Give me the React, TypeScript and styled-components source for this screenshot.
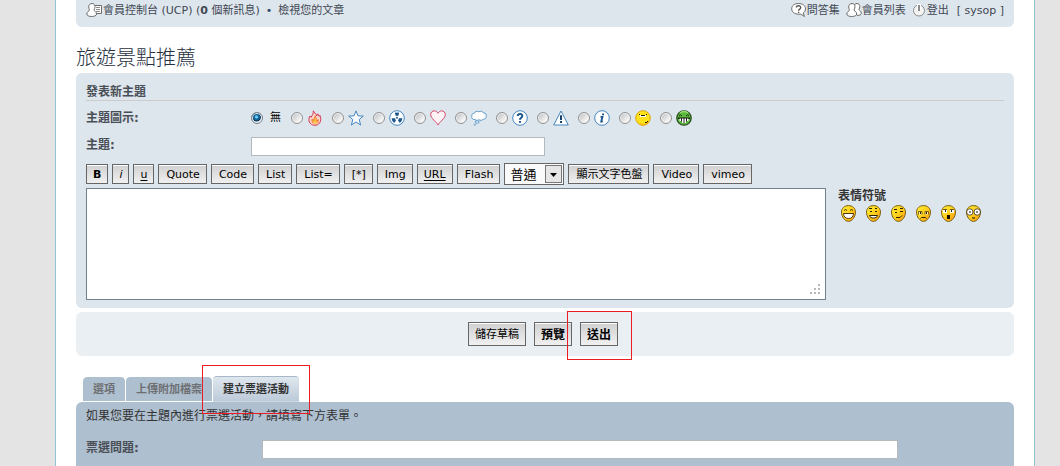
import React from "react";
import styled, { createGlobalStyle, css } from "styled-components";

const fontStack = `"DejaVu Sans", "Noto Sans CJK TC", sans-serif`;

const GlobalStyle = createGlobalStyle`
  *, *::before, *::after { box-sizing: border-box; }
  body {
    margin: 0;
    background: #e4e4e4;
    color: #333;
    font-family: ${fontStack};
    font-size: 11px;
    line-height: 16px;
  }
`;

const Page = styled.div`
  display: flex;
  flex-direction: column;
  min-height: 100vh;
  margin: 0 25px 0 55px;
  padding: 0 20px;
  background: #fff;
  border: 1px solid #8fc3d0;
  border-width: 0 1px;
`;

const NavBar = styled.nav`
  display: flex;
  justify-content: space-between;
  height: 27px;
  padding: 0 10px;
  line-height: 22px;
  color: #3f4653;
  background: #dee6ed;
  border-radius: 0 0 6px 6px;
`;

const NavGroup = styled.div`
  display: flex;
  align-items: center;
  gap: 6px;
  height: 22px;
`;

const NavLink = styled.a`
  display: inline-flex;
  align-items: center;
  color: inherit;
  text-decoration: none;
  white-space: pre;
  svg { margin-top: -2px; }
`;

const UserName = styled.span`
  margin-left: 8px;
`;

const NavSep = styled.span`
  color: #2b4a68;
`;

const Title = styled.h2`
  margin: 19px 0 0;
  padding-bottom: 3px;
  font-size: 20px;
  font-weight: 300;
  line-height: 24px;
  color: #28313f;
`;

const Panel = styled.section`
  padding: 10px 10px 8px;
  background: #dee6ed;
  border-radius: 6px;
`;

const PanelHeading = styled.h3`
  margin: 0 0 5px;
  padding-top: 1px;
  font-size: 12px;
  font-weight: 700;
  line-height: 16px;
  color: #4a4f57;
  border-bottom: 1px solid #ccc;
`;

const FieldRow = styled.div<{ $label?: number }>`
  display: grid;
  grid-template-columns: ${(p) => p.$label ?? 165}px 1fr;
  align-items: center;
`;

const FieldLabel = styled.label`
  font-size: 12px;
  font-weight: 700;
  color: #4a4f57;
`;

const IconChoices = styled.div`
  display: flex;
  align-items: center;
  height: 24px;
`;

const Choice = styled.label<{ $first?: boolean }>`
  display: flex;
  align-items: center;
  gap: ${(p) => (p.$first ? 7 : 4)}px;
  width: ${(p) => (p.$first ? 40 : 41)}px;
  color: #000;
`;

const Radio = styled.input.attrs({ type: "radio" })`
  appearance: none;
  flex: none;
  width: 12px;
  height: 12px;
  margin: 0;
  border: 1px solid #929292;
  border-radius: 50%;
  background: linear-gradient(135deg, #c4c6c8 15%, #f6f6f6 75%);
  box-shadow: inset 0 0 0 1px #f2f2f2;
  &:checked {
    border-color: #6f7f8c;
    background: radial-gradient(circle at 45% 40%, #6fd3f5 0 1px, #11639a 2px 3px, #0b2f4f 4px, #e8eef2 5px);
  }
`;

const TextInput = styled.input`
  max-width: 100%;
  height: 19px;
  padding: 0 3px;
  font: inherit;
  color: #333;
  background: #fff;
  border: 1px solid #b4babb;
  border-radius: 0;
`;

const SubjectInput = styled(TextInput)`
  width: 294px;
`;

const SubjectRow = styled(FieldRow)`
  height: 33px;
  align-items: start;
  padding-top: 7px;
`;

const Toolbar = styled.div`
  display: flex;
  align-items: center;
  gap: 4px;
  height: 22px;
  margin-bottom: 3px;
`;

const buttonFace = css`
  font-family: inherit;
  font-size: 11px;
  color: #000;
  white-space: nowrap;
  background: linear-gradient(#d0d0d0, #f0f0f0);
  border: 1px solid #666;
  border-radius: 0;
  box-shadow: inset 0 1px #fff;
`;

const ToolButton = styled.button<{ $look?: "bold" | "italic" | "underline" }>`
  ${buttonFace}
  height: 20px;
  padding: 1px 6px 0 ${(p) => (p.$look ? 6 : 7)}px;
  line-height: 16px;
  font-weight: ${(p) => (p.$look === "bold" ? 700 : 400)};
  font-style: ${(p) => (p.$look === "italic" ? "italic" : "normal")};
  text-decoration: ${(p) => (p.$look === "underline" ? "underline" : "none")};
  text-underline-offset: 2px;
`;

const SelectBox = styled.div`
  position: relative;
  width: 60px;
  height: 22px;
`;

const SizeSelect = styled.select`
  appearance: none;
  width: 100%;
  height: 100%;
  padding: 0 20px 0 5px;
  font-family: inherit;
  font-size: 13px;
  color: #000;
  background: #fafafa;
  border: 1px solid #666;
  border-radius: 0;
`;

const SelectArrow = styled.svg`
  position: absolute;
  top: 2px;
  right: 2px;
  width: 17px;
  height: 18px;
  pointer-events: none;
`;

const EditorRow = styled.div`
  display: flex;
  gap: 12px;
`;

const EditorBox = styled.div`
  position: relative;
  flex: 1;
  height: 112px;
`;

const Editor = styled.textarea`
  display: block;
  width: 100%;
  height: 100%;
  padding: 3px;
  font: inherit;
  resize: none;
  background: #fff;
  border: 1px solid #71808c;
  border-radius: 0;
`;

const Grip = styled.svg`
  position: absolute;
  right: 6px;
  bottom: 6px;
  pointer-events: none;
`;

const SmileyBox = styled.aside`
  width: 166px;
`;

const SmileyTitle = styled.strong`
  display: block;
  padding-top: 1px;
  font-size: 12px;
  line-height: 14px;
  color: #333;
`;

const SmileyList = styled.div`
  display: flex;
  gap: 8px;
  padding: 2px;
`;

const SmileyButton = styled.button`
  display: block;
  width: 17px;
  height: 17px;
  padding: 0;
  background: none;
  border: 0;
  svg { display: block; }
`;

const SubmitBar = styled.div`
  display: flex;
  align-items: center;
  justify-content: center;
  gap: 8px;
  height: 44px;
  margin-top: 4px;
  padding-right: 4px;
  background: #eaeff3;
  border-radius: 6px;
`;

const SubmitItem = styled.div`
  position: relative;
`;

const FormButton = styled.button<{ $strong?: boolean }>`
  ${buttonFace}
  display: block;
  height: 24px;
  padding: 1px 6px 0;
  line-height: 20px;
  font-size: ${(p) => (p.$strong ? 12 : 11)}px;
  font-weight: ${(p) => (p.$strong ? 700 : 400)};
`;

const Marker = styled.span<{ $inset: string }>`
  position: absolute;
  inset: ${(p) => p.$inset};
  z-index: 2;
  border: 1px solid #ed1c24;
  pointer-events: none;
`;

const Tabs = styled.div`
  display: flex;
  align-items: flex-end;
  gap: 1px;
  height: 26px;
  margin: 20px 0 0;
  padding-left: 7px;
`;

const Tab = styled.a<{ $active?: boolean }>`
  position: relative;
  height: ${(p) => (p.$active ? 26 : 25)}px;
  padding: 0 10px;
  font-weight: 700;
  line-height: 25px;
  text-decoration: none;
  color: ${(p) => (p.$active ? "#333" : "#6d6f73")};
  background: ${(p) => (p.$active ? "linear-gradient(#dfe7ee, #bdcad9)" : "#aebfcf")};
  border-top: ${(p) => (p.$active ? "1px solid #a9b8c8" : "0")};
  border-bottom: ${(p) => (p.$active ? "1px solid #cdd8e3" : "1px solid #fff0")};
  background-clip: padding-box;
  border-radius: 4px 4px 0 0;
`;

const PollPanel = styled.section`
  flex: 1;
  padding: 6px 10px 0;
  color: #333;
  background: #aebfcf;
  border-radius: 6px 6px 0 0;
`;

const PollHint = styled.p`
  margin: 0 0 16px;
  font-size: 12px;
  line-height: 16px;
`;

const PollInput = styled(TextInput)`
  width: 636px;
`;

const PollLabel = styled(FieldLabel)`
  align-self: start;
`;

/* 16px navigation glyphs */
const navStroke = { fill: "#fff", stroke: "#6b6b6b", strokeWidth: 1 };

const UcpIcon = () => (
  <svg width="17" height="16" viewBox="0 0 17 16" aria-hidden="true">
    <path d="M8 3.500h7.500v8H9" {...navStroke} />
    <path d="M10 5.500h4M10 7.500h4M10 9.500h4" stroke="#8b8b8b" />
    <path d="M6 1.500c2 0 3 1.500 3 3.300 0 1.300-.6 2.400-1 3.100 0 1.200 2.500 1.500 2.500 4.100 0 1.500-2 2.500-4.800 2.500S.8 13.500.8 12c0-2.400 2.700-3 2.700-4.100C3 7.200 2.700 6.100 2.700 4.800 2.700 3 4 1.500 6 1.500z" {...navStroke} />
  </svg>
);

const FaqIcon = () => (
  <svg width="16" height="16" viewBox="0 0 16 16" aria-hidden="true">
    <path d="M7.500 1.500c4.200 0 7 2.200 7 5.300 0 1.900-.9 3.300-2.300 4.200l1.300 3.500-3.800-2.400c-4.700.7-9-1.400-9-5.300 0-3.100 2.800-5.300 6.800-5.300z" {...navStroke} />
    <path d="M5.400 5.600c0-2.600 4.500-2.400 4.300.1-.1 1.500-2.100 1.400-2.100 3M7.600 9.800v1.300" fill="none" stroke="#555" strokeWidth="1.400" />
  </svg>
);

const MembersIcon = () => (
  <svg width="16" height="16" viewBox="0 0 16 16" aria-hidden="true">
    <path d="M11 1.500c1.800 0 2.800 1.400 2.800 3 0 1.200-.5 2.100-.9 2.800 0 1.200 2.400 1.500 2.400 4 0 1.300-1.700 2.200-4 2.200L8 8V4c.3-1.500 1.400-2.500 3-2.500z" {...navStroke} />
    <path d="M6 1.500c2 0 3 1.500 3 3.300 0 1.300-.6 2.400-1 3.100 0 1.200 2.700 1.500 2.700 4.100 0 1.500-2.200 2.500-5 2.500S.8 13.500.8 12c0-2.400 2.700-3 2.700-4.100C3 7.200 2.700 6.100 2.700 4.800 2.700 3 4 1.500 6 1.500z" {...navStroke} />
  </svg>
);

const LogoutIcon = () => (
  <svg width="15" height="16" viewBox="0 0 15 16" aria-hidden="true">
    <circle cx="7" cy="8.500" r="5.500" fill="#f4f4f4" stroke="#8b8b8b" />
    <path d="M7 2v6" stroke="#fff" strokeWidth="4" />
    <path d="M7 3v6" stroke="#666" strokeWidth="1.500" />
  </svg>
);

/* Topic icons */
const blue = "#4486c0";
const TopicSvg = ({ children }: { children: React.ReactNode }) => (
  <svg width="16" height="16" viewBox="0 0 16 16" aria-hidden="true">{children}</svg>
);

const topicIcons: { name: string; art: React.ReactNode }[] = [
  {
    name: "fire",
    art: (
      <>
        <path d="M6.300.8c.4 1.800 3.200 2.700 3.200 5.200l1.200-2.200c.4 1 .9 1.500 1.200 2.500l1.200-.8c1 3 1 5.700-.7 7.800-1 1.300-2.600 2-4.500 2-3.500 0-6-2.300-6-5.500 0-1.500.5-2.600 1-3.800l1.300 1.300C5 5.500 6.800 3.300 6.300.8z" fill="#fbd9c8" stroke="#d4365a" />
        <path d="M8 5.800c.3 2-1.500 2.400-1.300 4.400L5 9c-.6 3 .6 5 3 5s3.800-1.600 3.400-4.500L10 11C9.700 9 9.300 7.500 8 5.800z" fill="#fdb73c" stroke="#f0694a" strokeWidth=".8" />
        <path d="M6 12.500c1 1 3.200 1 4.300 0" stroke="#ffe98a" fill="none" />
      </>
    ),
  },
  {
    name: "star",
    art: <path d="M8 .9l2 4.900 5.300.3-4.100 3.400 1.400 5.500L8 12l-4.600 3 1.400-5.500L.7 6.100 6 5.800z" fill="#f7fbfe" stroke={blue} strokeLinejoin="round" />,
  },
  {
    name: "radioactive",
    art: (
      <>
        <circle cx="8" cy="8" r="7.300" fill="#fff" stroke={blue} />
        <circle cx="8" cy="7.800" r="1" fill="#1b568f" />
        <path d="M5.800 2.800Q8 2 10.200 2.800L9.200 6Q8 5.400 6.800 6zM2.600 8.300h3.500Q6.300 9.600 7 10.400L5.200 13Q2.800 11.300 2.600 8.300zM13.400 8.300H9.900Q9.700 9.600 9 10.400l1.800 2.600Q13.200 11.300 13.400 8.300z" fill="#1b568f" />
      </>
    ),
  },
  {
    name: "heart",
    art: <path d="M8 15C6.500 11.800.7 8.500.7 4.500.7 2.300 2.300.9 4.300.9 6 .9 7.300 1.900 8 3.300 8.700 1.900 10 .9 11.700.9c2 0 3.600 1.400 3.600 3.600 0 4-5.800 7.300-7.300 10.500z" fill="#fdf3f5" stroke="#d3486a" />,
  },
  {
    name: "thought",
    art: (
      <>
        <path d="M4 9.500C1.500 9.700.3 8 .8 6.500.3 4.800 1.500 3.200 3.200 3.300 4 1.600 6 .9 7.600 1.800 9.500.6 12 1.300 12.600 3c2.200-.1 3.300 1.800 2.500 3.400.4 1.800-1.100 3.200-2.900 2.800C11 10.700 9 10.600 8 9.700c-1.200 1-3 .9-4-.2z" fill="#fff" stroke="#5b9aca" />
        <ellipse cx="6.200" cy="12" rx="1.900" ry="1.200" fill="#fff" stroke="#5b9aca" />
        <circle cx="3.800" cy="14.600" r=".8" fill="#fff" stroke="#5b9aca" strokeWidth=".8" />
      </>
    ),
  },
  {
    name: "question",
    art: (
      <>
        <circle cx="8" cy="8" r="7.300" fill="#fff" stroke={blue} />
        <path d="M5.700 6C5.900 3.100 10.500 3.300 10.300 6 10.200 7.700 8 7.700 8 9.700M8 11v1.800" stroke="#1b568f" strokeWidth="2" fill="none" />
      </>
    ),
  },
  {
    name: "alert",
    art: (
      <>
        <path d="M8 1l7.300 14H.7z" fill="#fff" stroke={blue} strokeLinejoin="round" />
        <path d="M8 5.300V10M8 11v2" stroke="#17426d" strokeWidth="2" />
      </>
    ),
  },
  {
    name: "info",
    art: (
      <>
        <circle cx="8" cy="8" r="7.300" fill="#fff" stroke={blue} />
        <path d="M9.300 3.500l-.4 1.800M6.500 6.900h1.900l-1.100 4.700h1.500" stroke="#1b568f" strokeWidth="1.900" fill="none" />
      </>
    ),
  },
  {
    name: "worried",
    art: (
      <>
        <circle cx="8" cy="8" r="7.300" fill="#ffe21c" stroke="#d9a60c" />
        <path d="M14 11c-1.500 3.500-6 4.500-9 3" stroke="#f2b20c" strokeWidth="1.500" fill="none" />
        <path d="M5 7V5h6v2z" fill="#fff" />
        <path d="M4 4.500h1M11 4.500h1M6 5.500h4" stroke="#2a1f02" />
        <path d="M10 12.500h2M12 11.500h1" stroke="#2a1f02" fill="none" />
      </>
    ),
  },
  {
    name: "green grin",
    art: (
      <>
        <circle cx="8" cy="8" r="7.200" fill="#5cba3c" stroke="#2b4a20" strokeWidth="1.300" />
        <path d="M4 3C6 1 10 1 12 3" stroke="#91dc75" fill="none" strokeWidth="1.500" />
        <path d="M3 6l1.500-1.200L6 6M10 6l1.500-1.200L13 6" stroke="#123209" fill="none" />
        <path d="M2 7.500h12V9H2z" fill="#111" />
        <path d="M3.500 8.500h9V11h-2.500v2H6v-2H3.500z" fill="#fff" />
        <path d="M5.500 8v3.500M8 8v5M10.500 8v3.500" stroke="#222" />
      </>
    ),
  },
];

/* Smiley faces share an egg-shaped head */
const Face = ({ children }: { children: React.ReactNode }) => (
  <svg width="17" height="17" viewBox="0 0 17 17" aria-hidden="true">
    <defs>
      <linearGradient id="head" x1="0" y1="0" x2="1" y2="1">
        <stop offset="0" stopColor="#fff23a" />
        <stop offset=".5" stopColor="#ffd01c" />
        <stop offset="1" stopColor="#f79408" />
      </linearGradient>
    </defs>
    <path d="M8.500.6c4.200 0 7 2.800 7 6.500 0 4.500-3.300 9.300-7 9.300s-7-4.800-7-9.300C1.500 3.400 4.300.6 8.500.6z" fill="url(#head)" stroke="#7a5c14" />
    {children}
  </svg>
);

const dark = "#2c2003";
const smileys: { name: string; art: React.ReactNode }[] = [
  {
    name: "Very Happy",
    art: (
      <>
        <path d="M4 5.500l1.500-1L7 5.500M10 5.500l1.500-1L13 5.500" stroke={dark} fill="none" />
        <path d="M3.500 8.500h10c0 3-2 5-5 5s-5-2-5-5z" fill="#fff" stroke="#54340a" />
      </>
    ),
  },
  {
    name: "Smile",
    art: (
      <>
        <path d="M4 3.500h3M10 3.500h2M5 6.500h2M10 6.500h2" stroke={dark} />
        <path d="M4.500 10.500h8c-.5 2-2 2.500-4 2.500s-3.500-.5-4-2.500z" fill="#fff" stroke={dark} />
      </>
    ),
  },
  {
    name: "Wink",
    art: (
      <>
        <path d="M4 4.500h3M10 3.500h3M5 7.500h2M10 6.500h3" stroke={dark} />
        <path d="M6 12.500h4l2-2" stroke={dark} fill="none" />
      </>
    ),
  },
  {
    name: "Sad",
    art: (
      <>
        <path d="M3.500 9.500v-3H7v3M10 9.500v-3h3.500v3" fill="#fff0a8" stroke="#80611a" />
        <path d="M5.500 7v2M11.500 7v2" stroke={dark} />
        <path d="M5.500 13.500l1-1h4l1 1" stroke={dark} fill="none" />
      </>
    ),
  },
  {
    name: "Surprised",
    art: (
      <>
        <path d="M3 4h4v4H3zM10 4h4v4h-4z" fill="#fff" />
        <path d="M3 4.500h4M10 4.500h4" stroke="#71561a" />
        <path d="M5.500 5v2M11.500 5v2" stroke={dark} />
        <rect x="7" y="10" width="3" height="4" fill="#160d00" />
      </>
    ),
  },
  {
    name: "Shocked",
    art: (
      <>
        <circle cx="4.800" cy="7" r="3.200" fill="#fff" stroke="#3b2b08" strokeWidth=".8" />
        <circle cx="12.200" cy="7" r="3.200" fill="#fff" stroke="#3b2b08" strokeWidth=".8" />
        <path d="M4 7h2M11 7h2M7 13h3" stroke="#160d00" strokeWidth="1.200" />
      </>
    ),
  },
];

const leadingTools: { text: string; look?: "bold" | "italic" | "underline" }[] = [
  { text: "B", look: "bold" },
  { text: "i", look: "italic" },
  { text: "u", look: "underline" },
  { text: "Quote" },
  { text: "Code" },
  { text: "List" },
  { text: "List=" },
  { text: "[*]" },
  { text: "Img" },
  { text: "URL", look: "underline" },
  { text: "Flash" },
];

const trailingTools = ["顯示文字色盤", "Video", "vimeo"];

export default function App() {
  return (
    <>
      <GlobalStyle />
      <Page>
        <NavBar>
          <NavGroup>
            <NavLink href="#ucp"><UcpIcon /><span>會員控制台 (UCP) (<b>0</b> 個新訊息)</span></NavLink>
            <NavSep>•</NavSep>
            <NavLink href="#posts">檢視您的文章</NavLink>
          </NavGroup>
          <NavGroup>
            <NavLink href="#faq"><FaqIcon />問答集</NavLink>
            <NavLink href="#members"><MembersIcon />會員列表</NavLink>
            <NavLink href="#logout"><LogoutIcon />登出<UserName>[ sysop ]</UserName></NavLink>
          </NavGroup>
        </NavBar>

        <Title>旅遊景點推薦</Title>

        <Panel>
          <PanelHeading>發表新主題</PanelHeading>
          <FieldRow>
            <FieldLabel as="span" id="icon-label">主題圖示:</FieldLabel>
            <IconChoices role="radiogroup" aria-labelledby="icon-label">
              <Choice $first>
                <Radio name="icon" defaultChecked />無
              </Choice>
              {topicIcons.map((icon) => (
                <Choice key={icon.name}>
                  <Radio name="icon" aria-label={icon.name} />
                  <TopicSvg>{icon.art}</TopicSvg>
                </Choice>
              ))}
            </IconChoices>
          </FieldRow>
          <SubjectRow>
            <FieldLabel htmlFor="subject">主題:</FieldLabel>
            <SubjectInput id="subject" type="text" />
          </SubjectRow>

          <Toolbar>
            {leadingTools.map((tool) => (
              <ToolButton key={tool.text} type="button" $look={tool.look}>{tool.text}</ToolButton>
            ))}
            <SelectBox>
              <SizeSelect aria-label="字型大小" defaultValue="100">
                <option value="100">普通</option>
              </SizeSelect>
              <SelectArrow viewBox="0 0 17 18" aria-hidden="true">
                <rect x=".5" y=".5" width="16" height="17" fill="#e6e6e6" stroke="#777" />
                <path d="M5 8h7l-3.500 4z" fill="#000" />
              </SelectArrow>
            </SelectBox>
            {trailingTools.map((text) => (
              <ToolButton key={text} type="button">{text}</ToolButton>
            ))}
          </Toolbar>

          <EditorRow>
            <EditorBox>
              <Editor aria-label="文章內容" />
              <Grip width="10" height="10" viewBox="0 0 10 10" aria-hidden="true">
                <path d="M8 0h2v2H8zM4 4h2v2H4zM8 4h2v2H8zM0 8h2v2H0zM4 8h2v2H4zM8 8h2v2H8z" fill="#b8b8b8" />
              </Grip>
            </EditorBox>
            <SmileyBox>
              <SmileyTitle>表情符號</SmileyTitle>
              <SmileyList>
                {smileys.map((smiley) => (
                  <SmileyButton key={smiley.name} type="button" aria-label={smiley.name}>
                    <Face>{smiley.art}</Face>
                  </SmileyButton>
                ))}
              </SmileyList>
            </SmileyBox>
          </EditorRow>
        </Panel>

        <SubmitBar>
          <SubmitItem><FormButton type="button">儲存草稿</FormButton></SubmitItem>
          <SubmitItem><FormButton type="button" $strong>預覽</FormButton></SubmitItem>
          <SubmitItem>
            <FormButton type="submit" $strong>送出</FormButton>
            <Marker $inset="-11px -14px -14px -13px" />
          </SubmitItem>
        </SubmitBar>

        <Tabs>
          <Tab href="#options">選項</Tab>
          <Tab href="#attach">上傳附加檔案</Tab>
          <Tab href="#poll" $active>
            建立票選活動
            <Marker $inset="-12px -11px -13px" />
          </Tab>
        </Tabs>
        <PollPanel>
          <PollHint>如果您要在主題內進行票選活動，請填寫下方表單。</PollHint>
          <FieldRow $label={176}>
            <PollLabel htmlFor="poll">票選問題:</PollLabel>
            <PollInput id="poll" type="text" />
          </FieldRow>
        </PollPanel>
      </Page>
    </>
  );
}
